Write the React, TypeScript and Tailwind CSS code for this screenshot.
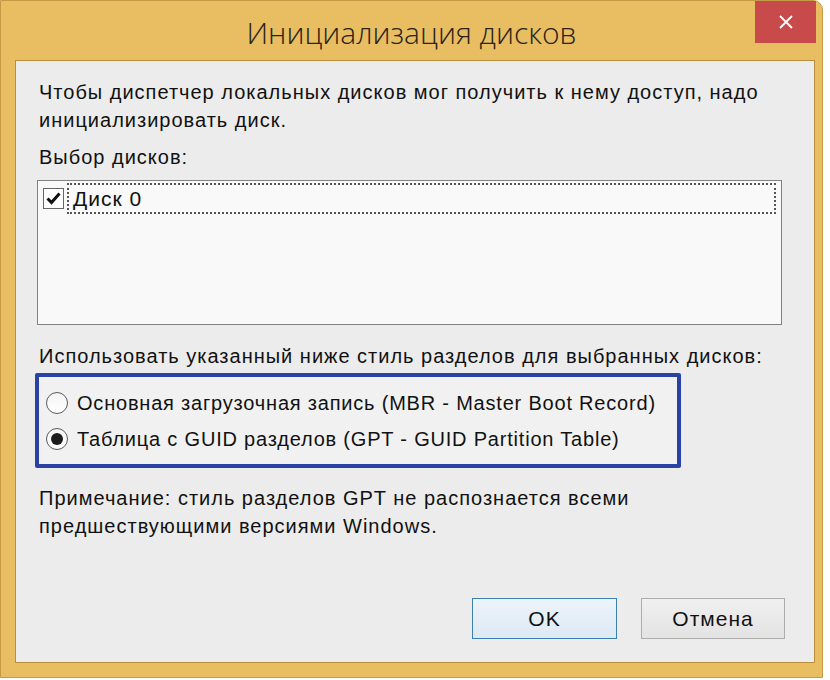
import React from "react";

const font = { fontFamily: '"Liberation Sans", Arial, sans-serif' };
const titleFont = { fontFamily: '"Open Sans", "Noto Sans", sans-serif' };

function Radio({ checked }: { checked?: boolean }) {
  return (
    <span className="flex h-[22px] w-[22px] items-center justify-center rounded-full border border-[#5a5a5a] bg-gradient-to-b from-[#f4f4f4] to-white">
      {checked && <span className="h-[12px] w-[12px] rounded-full bg-[#1c1c1c]" />}
    </span>
  );
}

export default function App() {
  return (
    <div className="h-[680px] w-[830px] bg-white" style={font}>
      <div className="flex h-[678px] w-[823px] flex-col rounded-tr-[10px] border border-[#c59a45] bg-[#e9be62]">
        <div className="relative h-[59px] shrink-0">
          <div className="pt-[12px] text-center text-[30px] font-light leading-[40px] text-[#2a2418]" style={titleFont}>
            Инициализация дисков
          </div>
          <div className="absolute right-[6px] top-0 flex h-[42px] w-[61px] items-center justify-center bg-[#c94a4b]">
            <svg width="16" height="16" viewBox="0 0 16 16">
              <path d="M2 2 L14 14 M14 2 L2 14" stroke="#fff" strokeWidth="1.8" />
            </svg>
          </div>
        </div>
        <div className="ml-[14px] mr-[7px] flex h-[603px] flex-col border border-[#b98f3c] bg-[#ececec] text-[20px] tracking-[1px] text-[#111]">
          <div className="pl-[23px] pt-[17px] leading-[28px]">
            <p>Чтобы диспетчер локальных дисков мог получить к нему доступ, надо</p>
            <p>инициализировать диск.</p>
          </div>
          <p className="mt-[9px] pl-[23px] leading-[28px]">Выбор дисков:</p>
          <div className="ml-[21px] mt-[9px] h-[145px] w-[745px] border border-[#828282] bg-[#f9f9f9] px-[5px] pt-[2px]">
            <div className="flex items-center gap-[3px]">
              <span className="flex h-[21px] w-[21px] items-center justify-center border border-[#666] bg-white">
                <svg width="15" height="13" viewBox="0 0 15 13">
                  <path d="M1.5 6.5 L5.5 10.5 L13.5 1.5" fill="none" stroke="#111" strokeWidth="3" />
                </svg>
              </span>
              <div className="flex h-[31px] flex-1 items-center border-2 border-dotted border-[#555] pl-[4px] text-[21px]">
                Диск 0
              </div>
            </div>
          </div>
          <p className="mt-[17px] pl-[23px] leading-[28px]">
            Использовать указанный ниже стиль разделов для выбранных дисков:
          </p>
          <div className="ml-[19px] mt-[3px] h-[95px] w-[646px] rounded-[2px] border-[4px] border-[#2a42a4] bg-[#f1f1f1] pl-[7px] pt-[10px] tracking-[0.8px]">
            <div className="flex h-[32px] items-center gap-[9px]">
              <Radio />
              <span>Основная загрузочная запись (MBR - Master Boot Record)</span>
            </div>
            <div className="mt-[4px] flex h-[32px] items-center gap-[9px]">
              <Radio checked />
              <span>Таблица с GUID разделов (GPT - GUID Partition Table)</span>
            </div>
          </div>
          <div className="pl-[23px] pt-[16px] leading-[28px]">
            <p>Примечание: стиль разделов GPT не распознается всеми</p>
            <p>предшествующими версиями Windows.</p>
          </div>
          <div className="mt-auto flex justify-end gap-[24px] pb-[23px] pr-[29px]">
            <button className="h-[41px] w-[145px] border border-[#3c7fb1] bg-gradient-to-b from-[#ecf4fb] to-[#dde9f3] text-[21px] text-[#111]">
              OK
            </button>
            <button className="h-[41px] w-[144px] border border-[#acacac] bg-gradient-to-b from-[#f0f0f0] to-[#e3e3e3] text-[21px] text-[#111]">
              Отмена
            </button>
          </div>
        </div>
      </div>
    </div>
  );
}
